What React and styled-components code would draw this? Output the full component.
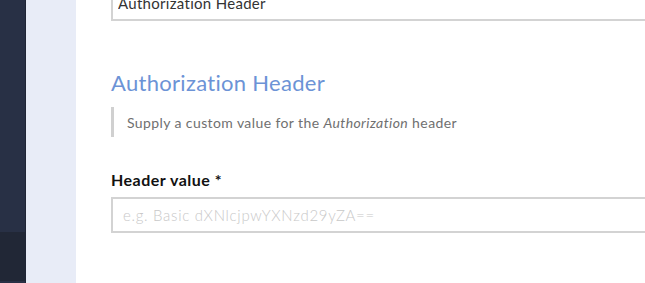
import styled, { createGlobalStyle } from 'styled-components';

const GlobalStyle = createGlobalStyle`
  html, body {
    margin: 0;
    padding: 0;
    height: 100%;
    overflow: hidden;
    background: #ffffff;
  }
  #root {
    height: 100%;
  }
`;

const Page = styled.div`
  display: flex;
  height: 283px;
  overflow: hidden;
  font-family: Lato, "Noto Sans", sans-serif;
`;

const Sidebar = styled.aside`
  display: flex;
  flex-direction: column;
  justify-content: flex-end;
  width: 25px;
  flex-shrink: 0;
  background: #283045;
  border-right: 1px solid #1f2535;
`;

const SidebarFooter = styled.div`
  height: 49px;
  margin-bottom: 2px;
  background: #212736;
`;

const Panel = styled.div`
  width: 50px;
  flex-shrink: 0;
  background: #e8ecf7;
`;

const Main = styled.main`
  flex: 1;
  padding-left: 35px;
  min-width: 0;
  overflow: hidden;
`;

const Content = styled.div`
  width: 700px;
`;

const TextInput = styled.input`
  display: block;
  box-sizing: border-box;
  width: 100%;
  height: 36px;
  padding: 0 ${(p) => p.$pad || '10px'};
  margin: ${(p) => p.$offset || '0'};
  border: 2px solid #d3d3d3;
  border-radius: 0;
  outline: none;
  font-family: Lato, "Noto Sans", sans-serif;
  font-size: 15px;
  letter-spacing: 0.3px;
  color: #333333;

  &::placeholder {
    color: #c8c8c8;
    font-weight: 300;
    letter-spacing: 0.7px;
  }
`;

const Heading = styled.h2`
  margin: 49px 0 11px;
  font-size: 22px;
  line-height: 26px;
  font-weight: 400;
  color: #6c93d6;
  letter-spacing: 0.3px;
`;

const Note = styled.blockquote`
  margin: 0;
  padding: 0 0 0 13px;
  height: 30px;
  display: flex;
  align-items: center;
  border-left: 3px solid #d0d0d0;
  font-size: 14px;
  color: #707070;
  letter-spacing: 0.4px;

  em {
    font-style: italic;
  }
`;

const Label = styled.label`
  display: block;
  margin: 33px 0 7px;
  font-size: 16px;
  line-height: 20px;
  font-weight: 700;
  color: #111111;
  letter-spacing: 0.5px;
`;

export default function App() {
  return (
    <>
      <GlobalStyle />
      <Page>
        <Sidebar>
          <SidebarFooter />
        </Sidebar>
        <Panel />
        <Main>
          <Content>
            <TextInput $offset="-15px 0 0" $pad="5px" defaultValue="Authorization Header" readOnly />
            <Heading>Authorization Header</Heading>
            <Note>
              <span>
                Supply a custom value for the <em>Authorization</em> header
              </span>
            </Note>
            <Label htmlFor="header-value">Header value *</Label>
            <TextInput id="header-value" placeholder="e.g. Basic dXNlcjpwYXNzd29yZA==" />
          </Content>
        </Main>
      </Page>
    </>
  );
}
